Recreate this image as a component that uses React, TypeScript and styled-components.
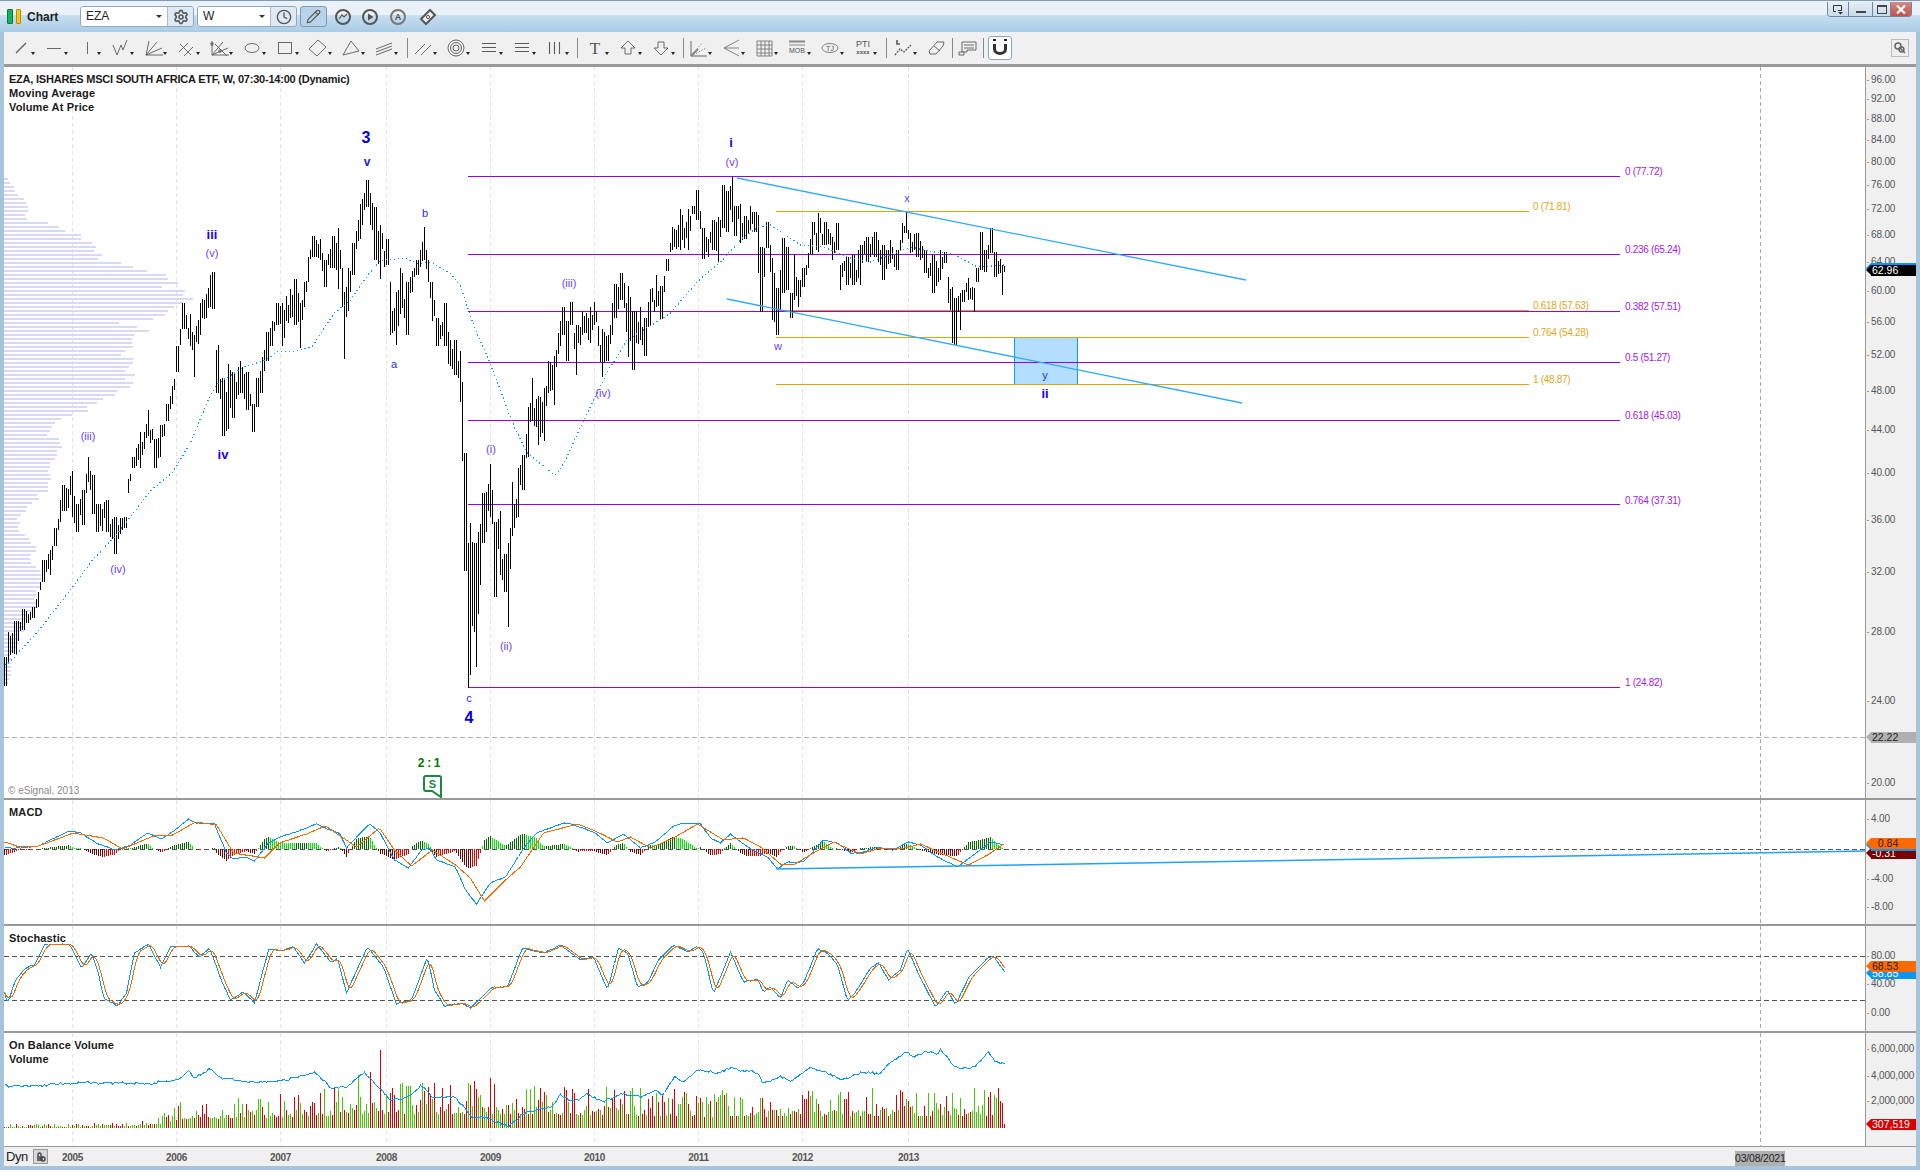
import React from 'react';
import styled, { createGlobalStyle } from 'styled-components';
import { Clock, Pencil, Settings } from 'lucide-react';

type Row = [number, number, number];
type Pt = [number, number];

const SANS = '"Liberation Sans", Arial, sans-serif';
const X_START = 4;
const X_END = 1005;
const GRID_XS = [72.5, 176.5, 280.5, 386.5, 490.5, 594.5, 698.5, 802.5, 908.5];
const YEARS = ['2005', '2006', '2007', '2008', '2009', '2010', '2011', '2012', '2013'];
const FUTURE_X = 1760.5;

const GlobalStyle = createGlobalStyle`
    html, body {
        margin: 0;
        padding: 0;
        background: #a8c4dc;
    }
    body {
        font-family: ${SANS};
        overflow: hidden;
    }
`;

// ---- data helpers ----
const seeded = (seed: number) => () => {
    seed = (seed + 0x6d2b79f5) | 0;
    let t = Math.imul(seed ^ (seed >>> 15), 1 | seed);
    t = (t + Math.imul(t ^ (t >>> 7), 61 | t)) ^ t;
    return ((t ^ (t >>> 14)) >>> 0) / 4294967296;
};

const lerp = (trace: number[][], x: number, col = 1) => {
    if (x <= trace[0][0]) return trace[0][col];
    for (let i = 1; i < trace.length; i++) {
        if (x <= trace[i][0]) {
            const [x0, x1] = [trace[i - 1][0], trace[i][0]];
            const f = (x - x0) / (x1 - x0 || 1);
            return trace[i - 1][col] + (trace[i][col] - trace[i - 1][col]) * f;
        }
    }
    return trace[trace.length - 1][col];
};

const sampled = (trace: Pt[], noise: number, seed: number): Pt[] => {
    const rnd = seeded(seed);
    const out: Pt[] = [];
    for (let x = X_START; x <= X_END; x += 2) {
        out.push([x + 0.5, lerp(trace, x) + (rnd() - 0.5) * noise]);
    }
    return out;
};

const toPoints = (pts: Pt[]) => pts.map(([x, y]) => `${x},${y.toFixed(1)}`).join(' ');

// left part was read off a crop that is squeezed vertically
const unsqueeze = (y: number) => 150 + (y - 150) * 1.0714;

const PRICE_LEFT: Row[] = [
    [5, 623, 650], [8, 600, 630], [15, 590, 620], [23, 578, 598], [33, 577, 587], [38, 563, 577], [43, 533, 553],
    [50, 523, 547], [55, 503, 520], [60, 477, 497], [63, 463, 487], [72, 450, 493], [77, 480, 507], [83, 467, 500],
    [88, 437, 460], [93, 453, 490], [97, 480, 507], [107, 477, 507], [115, 493, 527], [125, 493, 503], [128, 457, 470],
    [133, 437, 447], [140, 413, 447], [148, 393, 417], [155, 420, 447], [160, 407, 437], [167, 387, 403], [172, 370, 387],
    [177, 333, 357], [183, 293, 317], [190, 303, 333], [194, 323, 362], [200, 293, 323], [210, 267, 297], [213, 264, 298],
    [214, 317, 403], [218, 332, 377], [223, 363, 417], [228, 350, 410], [233, 357, 400], [240, 347, 377], [247, 357, 393],
    [253, 387, 413], [257, 363, 390], [262, 343, 377], [267, 320, 347], [272, 310, 333], [277, 293, 313], [282, 293, 333],
    [290, 280, 307], [295, 270, 313], [300, 293, 335], [304, 273, 297], [308, 250, 273], [313, 230, 250], [320, 233, 253],
    [325, 253, 278], [333, 230, 260], [338, 223, 280], [342, 260, 297], [344, 283, 345], [348, 260, 300], [353, 237, 267],
    [360, 200, 233], [367, 178, 203], [370, 190, 220], [375, 203, 253], [380, 220, 270], [387, 233, 257], [390, 273, 323],
    [396, 283, 332], [400, 260, 303], [407, 273, 323], [412, 263, 283], [417, 253, 267], [424, 222, 253], [428, 253, 273],
    [432, 273, 310], [437, 307, 333], [445, 293, 333], [448, 320, 350], [455, 327, 360], [460, 338, 385], [462, 367, 440],
    [465, 433, 543], [468, 517, 652], [470, 498, 640], [474, 517, 600], [476, 517, 633], [483, 470, 517], [490, 443, 493],
    [495, 497, 567], [500, 487, 547], [505, 527, 563], [508, 517, 595], [512, 460, 510], [518, 447, 493], [523, 435, 467],
    [528, 390, 437], [532, 363, 403], [538, 380, 425], [544, 372, 422], [548, 347, 377], [554, 342, 388], [560, 310, 333],
    [563, 297, 323], [567, 310, 347], [571, 292, 313], [576, 313, 360], [582, 300, 323], [590, 297, 330], [594, 292, 313],
    [602, 317, 362], [608, 323, 347], [612, 293, 323], [615, 275, 307], [621, 265, 290], [628, 277, 343], [633, 300, 355],
    [640, 297, 327], [645, 307, 342], [650, 280, 313], [656, 267, 297], [661, 277, 308], [664, 268, 283], [667, 252, 263],
    [672, 222, 243], [680, 205, 243], [688, 205, 243], [693, 202, 210], [697, 187, 215], [703, 223, 252], [708, 233, 250],
    [713, 215, 243], [718, 213, 255], [723, 183, 223], [727, 188, 227], [732, 175, 217], [735, 202, 230], [740, 200, 237],
    [745, 212, 233], [750, 202, 225], [755, 208, 227],
];

const PRICE_RIGHT: Row[] = [
    [758, 215, 273], [761, 247, 312], [763, 248, 277], [767, 222, 248], [768, 232, 257], [772, 258, 320], [774, 273, 322],
    [777, 288, 335], [779, 270, 310], [783, 238, 293], [787, 247, 290], [791, 293, 318], [794, 255, 300], [798, 280, 307],
    [803, 268, 287], [808, 253, 268], [812, 222, 255], [818, 213, 252], [825, 222, 245], [832, 237, 260], [837, 223, 250],
    [840, 265, 290], [847, 257, 285], [853, 255, 285], [860, 245, 285], [867, 237, 262], [875, 232, 257], [883, 245, 280],
    [890, 240, 263], [897, 250, 270], [902, 223, 243], [906, 212, 233], [910, 233, 253], [917, 233, 257], [925, 250, 273],
    [933, 255, 293], [940, 250, 280], [945, 252, 263], [948, 277, 303], [952, 287, 343], [955, 298, 345], [960, 293, 330],
    [963, 290, 302], [968, 278, 300], [974, 288, 312], [977, 268, 282], [981, 232, 270], [985, 250, 272], [991, 228, 253],
    [995, 252, 277], [1000, 259, 273], [1002, 265, 295], [1005, 266, 272],
];

const PRICE_TRACE: Row[] = [
    ...PRICE_LEFT.map(([x, t, b]): Row => [x, unsqueeze(t), unsqueeze(b)]),
    ...PRICE_RIGHT,
];

const MA_LEFT: Pt[] = [
    [7, 630], [37, 600], [72, 558], [90, 535], [117, 508], [150, 468], [173, 450], [190, 423], [208, 383], [217, 368],
    [243, 353], [267, 345], [277, 338], [293, 338], [312, 333], [333, 303], [350, 290], [367, 267], [380, 253], [405, 251],
    [417, 256], [430, 255], [450, 265], [460, 277], [473, 313], [490, 350], [513, 407], [527, 433], [555, 454], [563, 443],
    [583, 403], [607, 357], [627, 327], [657, 310], [670, 302], [700, 270],
];

const MA_TRACE: Pt[] = [
    ...MA_LEFT.map(([x, y]): Pt => [x, unsqueeze(y)]),
    [720, 262], [743, 237], [758, 227], [770, 225], [800, 245], [823, 247], [850, 258], [870, 262], [910, 247], [933, 252],
    [953, 254], [977, 267], [1004, 265],
];

// rows of the volume-at-price histogram, 4px apart
const PROFILE = [
    12, 18, 30, 33, 42, 60, 66, 72, 72, 63, 69, 132, 165, 183, 231, 231, 264, 276, 270, 294, 282, 351, 387, 429, 486, 492,
    522, 474, 543, 537, 567, 537, 510, 492, 483, 447, 345, 399, 435, 390, 384, 384, 387, 363, 351, 387, 387, 375, 363, 393,
    363, 387, 378, 339, 333, 297, 279, 249, 252, 205, 171, 153, 144, 138, 129, 165, 168, 174, 159, 159, 153, 138, 138, 132,
    138, 141, 132, 132, 132, 99, 105, 84, 69, 66, 51, 39, 48, 42, 45, 63, 75, 81, 96, 96, 81, 78, 81, 96, 108, 111, 111,
    111, 108, 96, 96, 90, 96, 102, 90, 69, 66, 57, 60, 60, 45, 48, 45, 39, 33, 21, 21, 21, 21, 21, 21, 15, 12,
].map((w) => w / 3);

const MACD_BLUE: Pt[] = [
    [4, 848], [19, 848], [38, 846], [54, 838], [69, 831], [80, 833], [96, 843], [115, 850], [130, 845], [147, 833], [161, 839],
    [172, 832], [188, 819], [195, 823], [214, 824], [226, 853], [233, 859], [245, 857], [254, 861], [268, 843], [279, 837],
    [295, 832], [316, 824], [329, 830], [339, 833], [346, 848], [360, 833], [369, 824], [379, 832], [394, 860], [408, 868],
    [421, 850], [429, 848], [436, 860], [455, 867], [465, 890], [476, 904], [490, 883], [505, 877], [524, 847], [536, 833],
    [563, 823], [570, 824], [593, 832], [607, 843], [623, 834], [640, 848], [655, 842], [673, 826], [683, 823], [700, 824],
    [710, 838], [720, 843], [730, 834], [747, 847], [767, 857], [777, 869], [787, 862], [803, 862], [823, 840], [837, 843],
    [850, 853], [860, 853], [877, 847], [893, 850], [907, 842], [920, 845], [937, 857], [957, 867], [973, 855], [990, 842],
    [1005, 845],
];

const MACD_ORANGE: Pt[] = [
    [4, 842], [19, 847], [38, 846], [73, 833], [103, 838], [122, 849], [153, 836], [172, 835], [195, 822], [216, 825], [233, 853],
    [264, 858], [279, 843], [306, 834], [325, 826], [356, 847], [379, 828], [394, 850], [411, 866], [432, 850], [455, 865],
    [469, 877], [484, 901], [505, 880], [520, 867], [543, 833], [577, 824], [597, 832], [617, 842], [630, 837], [650, 848],
    [673, 838], [697, 824], [723, 840], [743, 838], [760, 847], [780, 864], [793, 865], [813, 853], [833, 842], [860, 854],
    [880, 848], [900, 849], [920, 844], [940, 853], [968, 865], [987, 855], [1005, 843],
];

const STOCH_BLUE: Pt[] = [
    [4, 992], [7, 1004], [15, 980], [25, 968], [34, 965], [44, 945], [69, 944], [81, 968], [91, 953], [98, 973], [103, 998],
    [117, 1006], [126, 993], [134, 953], [148, 944], [160, 967], [170, 947], [188, 946], [199, 957], [209, 948], [222, 983],
    [230, 1000], [243, 992], [254, 1003], [268, 950], [283, 950], [293, 947], [304, 963], [316, 944], [331, 963], [337, 958],
    [346, 993], [367, 947], [383, 967], [396, 1004], [411, 1000], [427, 957], [434, 990], [444, 1006], [461, 1003], [470, 1008],
    [492, 987], [507, 987], [522, 948], [543, 953], [560, 945], [580, 960], [593, 957], [607, 990], [618, 948], [627, 953],
    [637, 987], [647, 983], [658, 960], [673, 945], [688, 952], [697, 946], [703, 953], [713, 994], [730, 952], [743, 982],
    [757, 979], [763, 992], [770, 987], [780, 998], [787, 980], [797, 988], [803, 983], [817, 949], [827, 953], [837, 965],
    [847, 1001], [855, 992], [870, 968], [878, 963], [888, 980], [900, 970], [907, 948], [917, 972], [935, 1007], [947, 990],
    [955, 1005], [968, 978], [987, 958], [993, 956], [1005, 973],
];

const OBV_TRACE: Pt[] = [
    [4, 1086], [38, 1086], [69, 1083], [126, 1083], [153, 1083], [178, 1079], [188, 1072], [195, 1078], [210, 1068], [220, 1078],
    [253, 1082], [279, 1082], [314, 1072], [331, 1088], [346, 1087], [364, 1072], [379, 1088], [390, 1100], [406, 1098], [421, 1085],
    [432, 1097], [455, 1097], [471, 1117], [486, 1117], [507, 1127], [524, 1113], [551, 1107], [560, 1095], [573, 1102], [587, 1094],
    [602, 1102], [620, 1094], [643, 1097], [655, 1089], [662, 1095], [674, 1077], [683, 1082], [697, 1070], [717, 1073], [730, 1068],
    [757, 1073], [762, 1083], [780, 1077], [790, 1081], [810, 1067], [827, 1073], [842, 1080], [860, 1073], [880, 1073], [890, 1062],
    [907, 1052], [913, 1058], [925, 1051], [937, 1055], [940, 1050], [955, 1068], [973, 1067], [988, 1052], [995, 1062], [1005, 1064],
];

const VOLUME_ENVELOPE: Pt[] = [
    [4, 4], [120, 5], [150, 10], [170, 18], [178, 28], [280, 36], [330, 40], [380, 45], [460, 48], [600, 42], [700, 38], [850, 38], [1005, 42],
];

const VOLUME_SPIKES: Record<number, [number, boolean]> = {
    358: [53, true], 370: [56, false], 380: [78, false], 490: [50, false], 722: [38, true], 872: [40, true], 998: [40, false], 1004: [4, false],
};

const buildPriceBars = () => {
    const rnd = seeded(11);
    let d = '';
    for (let x = X_START; x <= X_END; x += 2) {
        const anchor = PRICE_TRACE.find((r) => Math.abs(r[0] - x) <= 1);
        let y0: number;
        let y1: number;
        if (anchor) {
            [y0, y1] = [anchor[1], anchor[2]];
        } else {
            const top = lerp(PRICE_TRACE, x, 1);
            const span = lerp(PRICE_TRACE, x, 2) - top;
            const len = span * (0.35 + rnd() * 0.45);
            y0 = top + (span - len) * rnd();
            y1 = y0 + len;
        }
        d += `M${x + 0.5} ${Math.round(y0)}V${Math.round(y1)}`;
    }
    return d;
};

const buildVolume = () => {
    const rnd = seeded(23);
    let up = '';
    let down = '';
    for (let x = X_START; x <= X_END; x += 2) {
        const spike = VOLUME_SPIKES[x];
        const isUp = spike ? spike[1] : rnd() > 0.48;
        const r = rnd();
        const h = spike ? spike[0] : lerp(VOLUME_ENVELOPE as number[][], x) * (0.3 + r * r * 0.7);
        const seg = `M${x + 0.5} 1128V${Math.round(1128 - h)}`;
        if (isUp) up += seg;
        else down += seg;
    }
    return { up, down };
};

const buildHistogram = () => {
    const groups = { darkUp: '', brightUp: '', darkDown: '', brightDown: '' };
    let prev = 0;
    for (let x = X_START; x <= X_END; x += 2) {
        const v = (lerp(MACD_ORANGE, x) - lerp(MACD_BLUE, x)) * 1.05;
        const growing = Math.abs(v) > Math.abs(prev);
        const seg = `M${x + 0.5} 849V${Math.round(849 - v)}`;
        if (v > 0) groups[growing ? 'darkUp' : 'brightUp'] += seg;
        else groups[growing ? 'darkDown' : 'brightDown'] += seg;
        prev = v;
    }
    return groups;
};

const average = (pts: Pt[], n: number): Pt[] =>
    pts.map(([x], i) => {
        const from = Math.max(0, i - n + 1);
        const slice = pts.slice(from, i + 1);
        return [x, slice.reduce((sum, p) => sum + p[1], 0) / slice.length] as Pt;
    });

const priceBars = buildPriceBars();
const volume = buildVolume();
const histogram = buildHistogram();
const stochBlue = sampled(STOCH_BLUE, 0.8, 5);
const stochOrange = average(stochBlue, 4);

const priceY = (p: number) => 162 + 448 * Math.log(80 / p);

const WAVES = [
    { t: '3', x: 366, y: 137, k: 'huge' }, { t: 'v', x: 367, y: 162, k: 'minor' }, { t: 'iii', x: 212, y: 234, k: 'major' },
    { t: '(v)', x: 212, y: 253, k: 'sub' }, { t: 'iv', x: 223, y: 454, k: 'major' }, { t: '(iii)', x: 88, y: 436, k: 'sub' },
    { t: '(iv)', x: 118, y: 569, k: 'sub' }, { t: 'b', x: 425, y: 213, k: 'letter' }, { t: 'a', x: 394, y: 364, k: 'letter' },
    { t: 'c', x: 469, y: 698, k: 'letter' }, { t: '4', x: 469, y: 717, k: 'huge' }, { t: '(i)', x: 491, y: 449, k: 'sub' },
    { t: '(ii)', x: 506, y: 646, k: 'sub' }, { t: '(iii)', x: 569, y: 283, k: 'sub' }, { t: '(iv)', x: 603, y: 393, k: 'sub' },
    { t: '(v)', x: 732, y: 162, k: 'sub' }, { t: 'i', x: 731, y: 142, k: 'major' }, { t: 'x', x: 907, y: 198, k: 'sub' },
    { t: 'w', x: 778, y: 346, k: 'sub' }, { t: 'y', x: 1045, y: 375, k: 'letter' }, { t: 'ii', x: 1045, y: 393, k: 'major' },
];

const PURPLE_FIBS = [
    { y: 176.5, t: '0 (77.72)', ly: 171 }, { y: 254.5, t: '0.236 (65.24)', ly: 249 }, { y: 311.5, t: '0.382 (57.51)', ly: 306 },
    { y: 362.5, t: '0.5 (51.27)', ly: 357 }, { y: 420.5, t: '0.618 (45.03)', ly: 415 }, { y: 504.5, t: '0.764 (37.31)', ly: 500 },
    { y: 687.5, t: '1 (24.82)', ly: 682 },
];

const GOLD_FIBS = [
    { y: 211.5, t: '0 (71.81)', ly: 206 }, { y: 310.5, t: '0.618 (57.63)', ly: 305 },
    { y: 337.5, t: '0.764 (54.28)', ly: 332 }, { y: 384.5, t: '1 (48.87)', ly: 379 },
];

// ---- window chrome ----
const Window = styled.div`
    width: 1920px;
    height: 1170px;
    display: flex;
    flex-direction: column;
    background: #a8c4dc;
    overflow: hidden;
`;

const TitleBar = styled.div`
    height: 32px;
    box-sizing: border-box;
    flex: none;
    display: flex;
    align-items: center;
    padding-left: 7px;
    border-top: 1px solid #7f9bb6;
    background: linear-gradient(#eaf1f8 0, #eaf1f8 14px, #c8dff0 14px, #a9cce6 31px);
`;

const Logo = styled.div`
    display: flex;
    gap: 3px;
    width: 14px;
`;

const LogoBar = styled.span<{ $color: string; $edge: string }>`
    width: 5px;
    height: 13px;
    border-radius: 1px;
    background: ${({ $color }) => $color};
    border: 1px solid ${({ $edge }) => $edge};
`;

const WindowTitle = styled.span`
    margin-left: 6px;
    width: 31px;
    font-size: 12px;
    font-weight: bold;
    color: #222;
`;

const ComboGroup = styled.div<{ $left: number }>`
    display: flex;
    height: 21px;
    margin-left: ${({ $left }) => $left}px;
    border: 1px solid #8ea6be;
    border-radius: 3px;
    overflow: hidden;
    box-sizing: border-box;
`;

const ComboInput = styled.div<{ $width: number }>`
    position: relative;
    width: ${({ $width }) => $width}px;
    padding-left: 5px;
    box-sizing: border-box;
    background: #fff;
    font-size: 12px;
    line-height: 19px;
    color: #222;
    &::after {
        content: '';
        position: absolute;
        right: 5px;
        top: 8px;
        border: 3px solid transparent;
        border-top: 3px solid #333;
    }
`;

const ComboButton = styled.div`
    width: 25px;
    display: flex;
    align-items: center;
    justify-content: center;
    border-left: 1px solid #a9bccf;
    background: #dfe9f3;
    color: #555;
`;

const PencilButton = styled.div`
    width: 27px;
    height: 21px;
    margin-left: 3px;
    display: flex;
    align-items: center;
    justify-content: center;
    box-sizing: border-box;
    border: 1px solid #7e9ab4;
    border-radius: 3px;
    background: #b9d3e8;
    color: #555;
`;

const ChromeIcon = styled.div<{ $left: number }>`
    width: 24px;
    height: 24px;
    margin-left: ${({ $left }) => $left}px;
`;

const WindowControls = styled.div`
    display: flex;
    align-self: flex-start;
    margin: 1px 8px 0 auto;
    height: 14px;
    border: 1px solid #6d86a3;
    border-top: none;
    border-radius: 0 0 4px 4px;
    overflow: hidden;
`;

const ControlButton = styled.div<{ $width: number; $close?: boolean }>`
    width: ${({ $width }) => $width}px;
    display: flex;
    align-items: center;
    justify-content: center;
    border-left: 1px solid #6d86a3;
    background: ${({ $close }) => ($close ? 'linear-gradient(#d58b86, #c2524c)' : 'linear-gradient(#e6eef6, #c8dcee)')};
    &:first-child {
        border-left: none;
    }
`;

// ---- drawing tools row ----
const Toolbar = styled.div`
    height: 35px;
    box-sizing: border-box;
    flex: none;
    margin: 0 4px;
    display: flex;
    align-items: center;
    padding-left: 1px;
    background: #f0f0f0;
    border-bottom: 3px solid #999;
    position: relative;
`;

const ToolSlot = styled.div<{ $width?: number }>`
    position: relative;
    flex: none;
    width: ${({ $width }) => $width ?? 33}px;
    height: 32px;
    padding: 4px 0 0 4px;
    box-sizing: border-box;
`;

const Caret = styled.span`
    position: absolute;
    left: 26px;
    top: 20px;
    border: 2.5px solid transparent;
    border-top: 3px solid #222;
    border-bottom: none;
`;

const ToolDivider = styled.span<{ $before: number; $after: number }>`
    flex: none;
    width: 1px;
    height: 20px;
    margin: 0 ${({ $after }) => $after}px 0 ${({ $before }) => $before}px;
    background: #888;
`;

const MagnetButton = styled.div`
    flex: none;
    width: 24px;
    height: 24px;
    margin-left: 4px;
    box-sizing: border-box;
    border: 1px solid #8da4bd;
    border-radius: 3px;
    background: #fdfdfd;
`;

const PinButton = styled.div`
    position: absolute;
    right: 7px;
    top: 7px;
    width: 18px;
    height: 18px;
    display: flex;
    align-items: center;
    justify-content: center;
    box-sizing: border-box;
    border: 1px solid #bbb;
    background: #eee;
`;

const ToolText = styled.text<{ $size: number; $family?: string; $bold?: boolean }>`
    font-family: ${({ $family }) => $family ?? SANS};
    font-size: ${({ $size }) => $size}px;
    font-weight: ${({ $bold }) => ($bold ? 'bold' : 'normal')};
    fill: #555;
    stroke: none;
    text-anchor: middle;
`;

const Glyph = ({ children }: { children: React.ReactNode }) => (
    <svg width="24" height="24" viewBox="0 0 24 24" fill="none" stroke="#5a5a5a" strokeWidth="0.9">
        {children}
    </svg>
);

const G1 = [
    <path d="M7 17L17 7" strokeWidth="1.2" />,
    <path d="M5 12.5H19" />,
    <path d="M12.5 6V18" />,
    <path d="M5 9L9 19L13 9L15 14L19 4" />,
    <path d="M5 19L8 5M5 19L16 6M5 19L21 12M5 19H22" />,
    <path d="M5 16L14 7M10 20L19 11M6 8L17 19" />,
    <>
        <path d="M5 5V19H22M5 19L16 6M5 19L21 12M8 8L20 20" />
        <rect x="4" y="7" width="2" height="2" />
        <rect x="12" y="14" width="2" height="2" />
    </>,
    <ellipse cx="12" cy="12" rx="7" ry="4.5" />,
    <rect x="5.5" y="6.5" width="13" height="11" />,
    <path d="M3 13L12 4L20 11L11 20Z" />,
    <path d="M4 19L12 5L20 15Z" />,
    <path d="M4 13L20 7M4 16L20 10M4 19L20 13" />,
];

const G2 = [
    <path d="M4 18L14 8M10 19L20 9" />,
    <>
        <circle cx="12" cy="12" r="8" />
        <circle cx="12" cy="12" r="5.5" />
        <circle cx="12" cy="12" r="3" />
    </>,
    <path d="M5 7.5H19M5 11.5H19M5 15.5H19" strokeWidth="1.1" />,
    <path d="M5 7.5H19M5 11.5H19M5 15.5H19" strokeWidth="1.1" />,
    <path d="M6.5 6V18M11.5 6V18M16.5 6V18" strokeWidth="1.1" />,
];

const G3 = [
    <ToolText $size={17} $family={'"Liberation Serif", serif'} y="18" x="12">T</ToolText>,
    <path d="M12 5L19 12H15V18H9V12H5Z" />,
    <path d="M12 19L19 12H15V6H9V12H5Z" />,
];

const G4 = [
    <>
        <path d="M5 5V20H21" />
        <path d="M5 20L16 7M5 20L20 12" strokeDasharray="1 2" />
        <path d="M5 20L12 13" stroke="#888" strokeWidth="2" />
    </>,
    <path d="M5 12L20 4M5 12H20M5 12L20 20" stroke="#777" />,
    <path d="M5 5H20V20H5ZM5 9H20M5 13H20M5 17H20M9 5V20M13 5V20M17 5V20" stroke="#777" />,
    <>
        <path d="M4 5.5H20" stroke="#888" strokeWidth="2" />
        <path d="M4 9H20" stroke="#888" strokeWidth="1" />
        <ToolText $size={7} x="12" y="17">MOB</ToolText>
    </>,
    <>
        <ellipse cx="12" cy="12" rx="8" ry="4.5" stroke="#777" />
        <ToolText $size={7} x="12" y="14.5">TJ</ToolText>
    </>,
    <>
        <ToolText $size={9} x="12" y="11">PTI</ToolText>
        <ToolText $size={6} $bold x="12" y="18">xxxx</ToolText>
    </>,
];

const Tool = ({ glyph, caret = true, width }: { glyph: React.ReactNode; caret?: boolean; width?: number }) => (
    <ToolSlot $width={width}>
        <Glyph>{glyph}</Glyph>
        {caret && <Caret />}
    </ToolSlot>
);

const DrawingTools = () => (
    <Toolbar>
        {G1.map((g, i) => <Tool key={i} glyph={g} />)}
        <ToolDivider $before={6} $after={-1} />
        {G2.map((g, i) => <Tool key={i} glyph={g} />)}
        <ToolDivider $before={5} $after={1} />
        {G3.map((g, i) => <Tool key={i} glyph={g} />)}
        <ToolDivider $before={5} $after={-2} />
        {G4.map((g, i) => <Tool key={i} glyph={g} />)}
        <ToolDivider $before={6} $after={0} />
        <Tool
            glyph={
                <>
                    <path d="M6 4V8H9" strokeWidth="1.6" />
                    <path d="M4 19L9 13L13 16L20 9" strokeDasharray="2 1" strokeWidth="1.3" />
                </>
            }
        />
        <Tool width={32} caret={false} glyph={<path d="M5 15L13 6H20L19 10L12 18H6ZM10 10L16 15" />} />
        <ToolDivider $before={0} $after={-1} />
        <Tool
            width={31}
            caret={false}
            glyph={
                <>
                    <path d="M6 6H20V14H11V16H6Z" />
                    <path d="M8 9H18M8 12H18" />
                    <path d="M3 16H8V19H3Z" fill="#eee" />
                </>
            }
        />
        <ToolDivider $before={0} $after={0} />
        <MagnetButton>
            <svg width="22" height="22" viewBox="0 0 22 22" fill="none">
                <path d="M5.5 7V12C5.5 18 16.5 18 16.5 12V7" stroke="#333" strokeWidth="3" />
                <path d="M4 3H7M15 3H18" stroke="#222" strokeWidth="2" />
            </svg>
        </MagnetButton>
        <PinButton>
            <svg width="14" height="14" viewBox="0 0 14 14" fill="none" stroke="#666" strokeWidth="1.5">
                <circle cx="5" cy="5" r="3" />
                <path d="M7 7L12 12" />
                <circle cx="8.5" cy="8.5" r="2.4" />
            </svg>
        </PinButton>
    </Toolbar>
);

// ---- chart panes ----
const ChartFrame = styled.div`
    margin: 0 4px 5px;
    display: flex;
    flex-direction: column;
    flex: 1;
`;

const PaneRow = styled.div<{ $height: number; $line?: boolean }>`
    flex: none;
    height: ${({ $height }) => $height}px;
    box-sizing: border-box;
    display: flex;
    border-bottom: ${({ $line }) => ($line ? '2px solid #999' : 'none')};
`;

const PaneCanvas = styled.div`
    position: relative;
    width: 1861px;
    background: #fff;
    overflow: hidden;
`;

const PaneSvg = styled.svg`
    display: block;
`;

const PriceAxis = styled.div`
    position: relative;
    width: 51px;
    box-sizing: border-box;
    border-left: 1px solid #999;
    background: #f0f0f0;
    overflow: hidden;
`;

const AxisTick = styled.div`
    position: absolute;
    left: 0;
    height: 12px;
    margin-top: -6px;
    padding-left: 5px;
    font-size: 10px;
    line-height: 12px;
    letter-spacing: -0.15px;
    color: #555;
    white-space: nowrap;
    &::before {
        content: '';
        position: absolute;
        left: 1px;
        top: 6px;
        width: 2px;
        height: 1px;
        background: #999;
    }
`;

const PriceFlag = styled.div<{ $bg: string; $fg: string }>`
    position: absolute;
    left: 5px;
    right: 0;
    height: 11px;
    padding-left: 1px;
    font-size: 10.5px;
    line-height: 11px;
    white-space: nowrap;
    background: ${({ $bg }) => $bg};
    color: ${({ $fg }) => $fg};
    &::before {
        content: '';
        position: absolute;
        left: -5px;
        top: 0;
        border-top: 5.5px solid transparent;
        border-bottom: 5.5px solid transparent;
        border-right: 5px solid ${({ $bg }) => $bg};
    }
`;

const PaneLegend = styled.div`
    position: absolute;
    left: 5px;
    top: 5px;
    font-size: 11px;
    font-weight: bold;
    line-height: 14px;
    letter-spacing: 0.15px;
    color: #1a1a1a;
    white-space: nowrap;
`;

const LegendTitle = styled.span`
    letter-spacing: -0.22px;
`;

const Copyright = styled.text`
    font-family: ${SANS};
    font-size: 10px;
    fill: #8a8a8a;
`;

const WaveText = styled.text<{ $kind: string }>`
    font-family: ${SANS};
    text-anchor: middle;
    dominant-baseline: central;
    font-size: ${({ $kind }) => ({ huge: 16, major: 13, minor: 12, letter: 11, sub: 11 }[$kind])}px;
    font-weight: ${({ $kind }) => ($kind === 'huge' || $kind === 'major' || $kind === 'minor' ? 'bold' : 'normal')};
    fill: ${({ $kind }) => ({ huge: '#0000e0', major: '#2200ee', minor: '#2222dd', letter: '#2a2aee', sub: '#6a40ff' }[$kind])};
`;

const FibText = styled.text<{ $color: string }>`
    font-family: ${SANS};
    font-size: 10px;
    letter-spacing: -0.3px;
    dominant-baseline: central;
    fill: ${({ $color }) => $color};
`;

const SignalText = styled.text`
    font-family: ${SANS};
    font-size: 12px;
    font-weight: bold;
    letter-spacing: -0.3px;
    text-anchor: middle;
    dominant-baseline: central;
    fill: #007a00;
`;

const FlagLetter = styled.text`
    font-family: ${SANS};
    font-size: 11px;
    font-weight: bold;
    text-anchor: middle;
    fill: #1a8a3c;
`;

const Pane = ({ top, height, children }: { top: number; height: number; children: React.ReactNode }) => (
    <PaneSvg width="1861" height={height} viewBox={`4 ${top} 1861 ${height}`}>
        {GRID_XS.map((x) => (
            <line key={x} x1={x} x2={x} y1={top} y2={top + height} stroke="#e2e2e2" strokeDasharray="4 3" />
        ))}
        <line x1={FUTURE_X} x2={FUTURE_X} y1={top} y2={top + height} stroke="#a8a8a8" strokeDasharray="4 3" />
        {children}
    </PaneSvg>
);

const Line = ({ pts, color }: { pts: Pt[]; color: string }) => (
    <polyline points={toPoints(pts)} fill="none" stroke={color} strokeWidth="1" shapeRendering="crispEdges" />
);

const MainPane = () => (
    <Pane top={67} height={731}>
        {PROFILE.map((w, i) => (
            <rect key={i} x="4" y={178 + i * 4} width={w} height="2" fill="#d8d8f8" />
        ))}
        <rect x="1014" y="337" width="63" height="47" fill="#b3deff" />
        <path d="M1014.5 337V384M1077.5 337V384" stroke="#1199ff" shapeRendering="crispEdges" />
        <line x1="4" x2="1865" y1="737.5" y2="737.5" stroke="#b0b0b0" strokeDasharray="5 3" />
        {PURPLE_FIBS.map((f) => (
            <line key={f.y} x1="468" x2="1620" y1={f.y} y2={f.y} stroke="#9200ee" strokeWidth="1.2" shapeRendering="crispEdges" />
        ))}
        {GOLD_FIBS.map((f) => (
            <line key={f.y} x1="776" x2="1529" y1={f.y} y2={f.y} stroke="#dca800" strokeWidth="1.2" shapeRendering="crispEdges" />
        ))}
        <path d={priceBars} stroke="#000" strokeWidth="1" shapeRendering="crispEdges" />
        <polyline
            points={toPoints(sampled(MA_TRACE, 0, 1))}
            fill="none"
            stroke="#0a9cff"
            strokeWidth="1.2"
            strokeDasharray="1.2 2.8"
            shapeRendering="crispEdges"
        />
        <path d="M737 178L1246 280M727 299L1242 403" stroke="#33aaf5" strokeWidth="1.3" fill="none" />
        {PURPLE_FIBS.map((f) => (
            <FibText key={f.t} $color="#a020e8" x="1625" y={f.ly}>{f.t}</FibText>
        ))}
        {GOLD_FIBS.map((f) => (
            <FibText key={f.t} $color="#dca820" x="1533" y={f.ly}>{f.t}</FibText>
        ))}
        {WAVES.map((w, i) => (
            <WaveText key={i} $kind={w.k} x={w.x} y={w.y}>{w.t}</WaveText>
        ))}
        <SignalText x="429" y="763">2 : 1</SignalText>
        <path d="M426 776H439Q441 776 441 778V797L432 791H426Q424 791 424 789V778Q424 776 426 776Z" fill="#fff" stroke="#1a8a3c" strokeWidth="2" />
        <FlagLetter x="432.5" y="788">S</FlagLetter>
        <Copyright x="8" y="794">© eSignal, 2013</Copyright>
    </Pane>
);

const MacdPane = () => (
    <Pane top={800} height={124}>
        <line x1="4" x2="1865" y1="849.5" y2="849.5" stroke="#555" strokeDasharray="5 3" />
        <path d={histogram.darkUp} stroke="#006a00" shapeRendering="crispEdges" />
        <path d={histogram.brightUp} stroke="#00e800" shapeRendering="crispEdges" />
        <path d={histogram.darkDown} stroke="#7a0000" shapeRendering="crispEdges" />
        <path d={histogram.brightDown} stroke="#ee0000" shapeRendering="crispEdges" />
        <Line pts={sampled(MACD_BLUE, 0.6, 2)} color="#0a96f5" />
        <Line pts={sampled(MACD_ORANGE, 0.2, 3)} color="#f56a00" />
        <line x1="776" x2="1865" y1="869" y2="851" stroke="#22a0ff" strokeWidth="1.5" />
    </Pane>
);

const StochasticPane = () => (
    <Pane top={926} height={105}>
        <path d="M4 956.5H1865M4 1000.5H1865" stroke="#555" strokeDasharray="5 3" />
        <Line pts={stochBlue} color="#0a96f5" />
        <Line pts={stochOrange} color="#f56a00" />
    </Pane>
);

const VolumePane = () => (
    <Pane top={1033} height={113}>
        <path d={volume.up} stroke="#44c800" shapeRendering="crispEdges" />
        <path d={volume.down} stroke="#dc0000" shapeRendering="crispEdges" />
        <Line pts={sampled(OBV_TRACE, 2.4, 7)} color="#0a96f5" />
    </Pane>
);

const Ticks = ({ top, items }: { top: number; items: [number, string][] }) => (
    <>
        {items.map(([y, label]) => (
            <AxisTick key={label} style={{ top: y - top }}>{label}</AxisTick>
        ))}
    </>
);

const PRICE_TICKS: [number, string][] = [96, 92, 88, 84, 80, 76, 72, 68, 64, 60, 56, 52, 48, 44, 40, 36, 32, 28, 24, 20].map(
    (p) => [priceY(p), `${p}.00`],
);

// ---- time axis ----
const TimeAxis = styled.div`
    position: relative;
    flex: none;
    height: 19px;
    border-top: 1px solid #999;
    display: flex;
    align-items: center;
    background: #f0f0f0;
`;

const DynLabel = styled.span`
    margin-left: 2px;
    font-size: 13px;
    letter-spacing: -0.5px;
    color: #222;
`;

const LockButton = styled.div`
    width: 15px;
    height: 15px;
    margin-left: 5px;
    display: flex;
    align-items: center;
    justify-content: center;
    box-sizing: border-box;
    border: 1px solid #999;
    background: #d8d8d8;
`;

const YearLabel = styled.span`
    position: absolute;
    top: 5px;
    width: 40px;
    margin-left: -20px;
    text-align: center;
    font-size: 10px;
    font-weight: bold;
    letter-spacing: -0.3px;
    color: #555;
`;

const DateFlag = styled.span`
    position: absolute;
    left: 1731px;
    top: 4px;
    width: 50px;
    height: 15px;
    text-align: center;
    font-size: 10.5px;
    line-height: 15px;
    letter-spacing: -0.2px;
    background: #b0b0b0;
    color: #222;
`;

const App = () => (
    <Window>
        <GlobalStyle />
        <TitleBar>
            <Logo>
                <LogoBar $color="#17b35c" $edge="#0d7a3d" />
                <LogoBar $color="#f5c518" $edge="#c08a00" />
            </Logo>
            <WindowTitle>Chart</WindowTitle>
            <ComboGroup $left={22}>
                <ComboInput $width={86}>EZA</ComboInput>
                <ComboButton>
                    <Settings size={16} strokeWidth={2.4} />
                </ComboButton>
            </ComboGroup>
            <ComboGroup $left={3}>
                <ComboInput $width={72}>W</ComboInput>
                <ComboButton>
                    <Clock size={16} strokeWidth={2} />
                </ComboButton>
            </ComboGroup>
            <PencilButton>
                <Pencil size={15} strokeWidth={1.8} />
            </PencilButton>
            <ChromeIcon $left={4}>
                <svg width="24" height="24" viewBox="0 0 24 24" fill="none" stroke="#555">
                    <circle cx="12" cy="12" r="7" strokeWidth="2" />
                    <path d="M8 14L11 10L13 12L16 9" strokeWidth="1.2" />
                </svg>
            </ChromeIcon>
            <ChromeIcon $left={3}>
                <svg width="24" height="24" viewBox="0 0 24 24" fill="none" stroke="#555">
                    <circle cx="12" cy="12" r="7" strokeWidth="2" />
                    <path d="M10 8.5V15.5L15.5 12Z" fill="#555" stroke="none" />
                </svg>
            </ChromeIcon>
            <ChromeIcon $left={4}>
                <svg width="24" height="24" viewBox="0 0 24 24" fill="none" stroke="#777">
                    <circle cx="12" cy="12" r="7" strokeWidth="2" />
                    <ToolText $size={9} $bold x="12" y="15">A</ToolText>
                </svg>
            </ChromeIcon>
            <ChromeIcon $left={6}>
                <svg width="24" height="24" viewBox="0 0 24 24" fill="none" stroke="#555">
                    <path d="M5 14L14 5L19 10L10 19Z" strokeWidth="2" fill="#eee" />
                    <circle cx="12" cy="12" r="1.6" strokeWidth="1" />
                </svg>
            </ChromeIcon>
            <WindowControls>
                <ControlButton $width={20}>
                    <svg width="12" height="11" viewBox="0 0 12 11" fill="none" stroke="#333">
                        <path d="M1.5 1.5H9.5V6.5H6M1.5 1.5V7.5H4" />
                        <path d="M6 8H11L8.5 10.5Z" fill="#333" stroke="none" />
                    </svg>
                </ControlButton>
                <ControlButton $width={23}>
                    <svg width="12" height="11" viewBox="0 0 12 11">
                        <rect x="1" y="7" width="10" height="2" fill="#444" />
                    </svg>
                </ControlButton>
                <ControlButton $width={17}>
                    <svg width="12" height="11" viewBox="0 0 12 11" fill="none" stroke="#444">
                        <rect x="1.5" y="1.5" width="9" height="8" />
                        <path d="M1.5 2.5H10.5" />
                    </svg>
                </ControlButton>
                <ControlButton $width={20} $close>
                    <svg width="12" height="11" viewBox="0 0 12 11" stroke="#fff" strokeWidth="2.2">
                        <path d="M2 1.5L10 9.5M10 1.5L2 9.5" />
                    </svg>
                </ControlButton>
            </WindowControls>
        </TitleBar>
        <DrawingTools />
        <ChartFrame>
            <PaneRow $height={733} $line>
                <PaneCanvas>
                    <MainPane />
                    <PaneLegend>
                        <LegendTitle>EZA, ISHARES MSCI SOUTH AFRICA ETF, W, 07:30-14:00 (Dynamic)</LegendTitle>
                        <br />
                        Moving Average
                        <br />
                        Volume At Price
                    </PaneLegend>
                </PaneCanvas>
                <PriceAxis>
                    <Ticks top={67} items={PRICE_TICKS} />
                    <PriceFlag $bg="#0a96f5" $fg="#fff" style={{ top: 263 - 67 }} />
                    <PriceFlag $bg="#000" $fg="#fff" style={{ top: 265 - 67 }}>62.96</PriceFlag>
                    <PriceFlag $bg="#b0b0b0" $fg="#222" style={{ top: 732 - 67 }}>22.22</PriceFlag>
                </PriceAxis>
            </PaneRow>
            <PaneRow $height={126} $line>
                <PaneCanvas>
                    <MacdPane />
                    <PaneLegend>MACD</PaneLegend>
                </PaneCanvas>
                <PriceAxis>
                    <Ticks top={800} items={[[819, '4.00'], [879, '-4.00'], [907, '-8.00']]} />
                    <PriceFlag $bg="#7a0000" $fg="#fff" style={{ top: 848 - 800 }}>-0.31</PriceFlag>
                    <PriceFlag $bg="#0a96f5" $fg="#fff" style={{ top: 840 - 800 }} />
                    <PriceFlag $bg="#ff6a00" $fg="#222" style={{ top: 838 - 800 }}>&nbsp;&nbsp;0.84</PriceFlag>
                </PriceAxis>
            </PaneRow>
            <PaneRow $height={107} $line>
                <PaneCanvas>
                    <StochasticPane />
                    <PaneLegend>Stochastic</PaneLegend>
                </PaneCanvas>
                <PriceAxis>
                    <Ticks top={926} items={[[956, '80.00'], [984, '40.00'], [1013, '0.00']]} />
                    <PriceFlag $bg="#0a96f5" $fg="#fff" style={{ top: 968 - 926 }}>58.85</PriceFlag>
                    <PriceFlag $bg="#ff6a00" $fg="#222" style={{ top: 961 - 926 }}>68.53</PriceFlag>
                </PriceAxis>
            </PaneRow>
            <PaneRow $height={113}>
                <PaneCanvas>
                    <VolumePane />
                    <PaneLegend>
                        On Balance Volume
                        <br />
                        Volume
                    </PaneLegend>
                </PaneCanvas>
                <PriceAxis>
                    <Ticks top={1033} items={[[1049, '6,000,000'], [1076, '4,000,000'], [1101, '2,000,000']]} />
                    <PriceFlag $bg="#dd0000" $fg="#fff" style={{ top: 1119 - 1033 }}>307,519</PriceFlag>
                </PriceAxis>
            </PaneRow>
            <TimeAxis>
                <DynLabel>Dyn</DynLabel>
                <LockButton>
                    <svg width="11" height="11" viewBox="0 0 11 11" fill="none" stroke="#444" strokeWidth="1.4">
                        <path d="M3 5V3.5C3 1.5 6 1.5 6 3.5V5" />
                        <rect x="2" y="5" width="6" height="5" fill="#666" stroke="none" />
                        <circle cx="8" cy="8" r="2" />
                    </svg>
                </LockButton>
                {YEARS.map((y, i) => (
                    <YearLabel key={y} style={{ left: GRID_XS[i] - 4 }}>{y}</YearLabel>
                ))}
                <DateFlag>03/08/2021</DateFlag>
            </TimeAxis>
        </ChartFrame>
    </Window>
);

export default App;
